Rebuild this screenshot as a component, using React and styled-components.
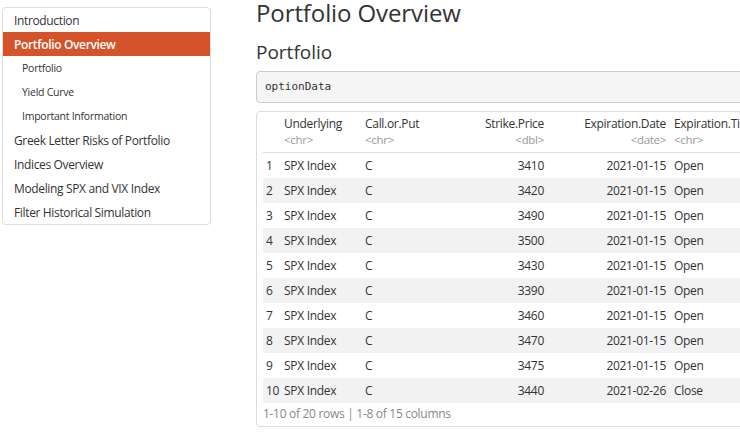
import React from "react";
import styled, { createGlobalStyle } from "styled-components";

const GlobalStyle = createGlobalStyle`
  html, body {
    margin: 0;
    padding: 0;
    background: #fff;
    overflow: hidden;
  }
  body {
    font-family: "Open Sans", "Noto Sans", sans-serif;
    color: #333;
  }
`;

const Page = styled.div`
  display: flex;
  align-items: flex-start;
  width: 740px;
  height: 434px;
  overflow: hidden;
`;

const Toc = styled.ul`
  flex: 0 0 207px;
  margin: 7px 0 0 2px;
  padding: 0;
  list-style: none;
  border: 1px solid #ddd;
  border-radius: 4px;
  overflow: hidden;
`;

const TocItem = styled.li`
  display: flex;
  align-items: center;
  height: 24px;
  padding-left: ${({ sub }) => (sub ? "19px" : "11px")};
  font-size: ${({ sub }) => (sub ? "10.5px" : "12px")};
  letter-spacing: ${({ sub }) => (sub ? "-0.25px" : "-0.35px")};
  color: ${({ active }) => (active ? "#fff" : "#333")};
  background: ${({ active }) => (active ? "#d4532b" : "transparent")};
  font-weight: ${({ active }) => (active ? 600 : 400)};
  white-space: nowrap;
`;

const Main = styled.div`
  flex: 0 0 520px;
  margin-left: 45px;
  min-width: 0;
`;

const Title = styled.h1`
  margin: 0;
  font-size: 24px;
  font-weight: 400;
  line-height: 26px;
  letter-spacing: -0.1px;
`;

const Subtitle = styled.h2`
  margin: 14px 0 0;
  font-size: 19px;
  font-weight: 400;
  line-height: 25px;
`;

const CodeBlock = styled.pre`
  margin: 6px 0 0;
  padding: 0 8px;
  height: 30px;
  line-height: 30px;
  background: #f5f5f5;
  border: 1px solid #ccc;
  border-radius: 4px;
  font-family: "DejaVu Sans Mono", "Liberation Mono", monospace;
  font-size: 11px;
  color: #333;
`;

const TableBox = styled.div`
  margin-top: 8px;
  padding: 0 6px;
  height: 314px;
  border: 1px solid #ddd;
  border-radius: 4px;
  font-size: 12px;
  letter-spacing: -0.3px;
`;

const Row = styled.div`
  display: grid;
  grid-template-columns: 17px 81px 95px 92px 122px 1fr;
  height: ${({ head }) => (head ? "41px" : "25px")};
  box-sizing: border-box;
  align-items: center;
  background: ${({ striped }) => (striped ? "#f2f2f2" : "transparent")};
  border-bottom: ${({ head }) => (head ? "1px solid #ddd" : "none")};
  white-space: nowrap;
`;

const Cell = styled.div`
  padding: ${({ first }) => (first ? "0 0 0 3px" : "0 4px")};
  text-align: ${({ right }) => (right ? "right" : "left")};
  overflow: hidden;
`;

const HeadCell = styled(Cell)`
  display: flex;
  flex-direction: column;
  align-items: ${({ right }) => (right ? "flex-end" : "flex-start")};
  line-height: 16px;
`;

const Type = styled.span`
  color: #999;
  font-size: 11.5px;
`;

const Footer = styled.div`
  height: 24px;
  line-height: 22px;
  color: #888;
  font-size: 12px;
`;

const tocItems = [
  { label: "Introduction" },
  { label: "Portfolio Overview", active: true },
  { label: "Portfolio", sub: true },
  { label: "Yield Curve", sub: true },
  { label: "Important Information", sub: true },
  { label: "Greek Letter Risks of Portfolio" },
  { label: "Indices Overview" },
  { label: "Modeling SPX and VIX Index" },
  { label: "Filter Historical Simulation" },
];

const columns = [
  { name: "Underlying", type: "<chr>" },
  { name: "Call.or.Put", type: "<chr>" },
  { name: "Strike.Price", type: "<dbl>", right: true },
  { name: "Expiration.Date", type: "<date>", right: true },
  { name: "Expiration.Time", type: "<chr>" },
];

const rows = [
  [3410, "2021-01-15", "Open"],
  [3420, "2021-01-15", "Open"],
  [3490, "2021-01-15", "Open"],
  [3500, "2021-01-15", "Open"],
  [3430, "2021-01-15", "Open"],
  [3390, "2021-01-15", "Open"],
  [3460, "2021-01-15", "Open"],
  [3470, "2021-01-15", "Open"],
  [3475, "2021-01-15", "Open"],
  [3440, "2021-02-26", "Close"],
];

const App = () => {
  return (
    <Page>
      <GlobalStyle />
      <Toc>
        {tocItems.map((item) => (
          <TocItem key={item.label} sub={item.sub} active={item.active}>
            {item.label}
          </TocItem>
        ))}
      </Toc>
      <Main>
        <Title>Portfolio Overview</Title>
        <Subtitle>Portfolio</Subtitle>
        <CodeBlock>optionData</CodeBlock>
        <TableBox>
          <Row head>
            <Cell first />
            {columns.map((col) => (
              <HeadCell key={col.name} right={col.right}>
                <span>{col.name}</span>
                <Type>{col.type}</Type>
              </HeadCell>
            ))}
          </Row>
          {rows.map((r, i) => (
            <Row key={i} striped={i % 2 === 1}>
              <Cell first>{i + 1}</Cell>
              <Cell>SPX Index</Cell>
              <Cell>C</Cell>
              <Cell right>{r[0]}</Cell>
              <Cell right>{r[1]}</Cell>
              <Cell>{r[2]}</Cell>
            </Row>
          ))}
          <Footer>1-10 of 20 rows | 1-8 of 15 columns</Footer>
        </TableBox>
      </Main>
    </Page>
  );
};

export default App;
